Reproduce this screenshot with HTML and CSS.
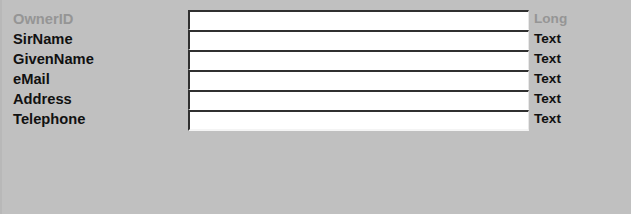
FILE: index.html
```html
<!DOCTYPE html>
<html lang="en">
<head>
    <meta charset="UTF-8">
    <title>Owner</title>
    <link rel="stylesheet" href="styles.css">
</head>
<body>
    <div class="form">
        <div class="row">
            <label class="field-name disabled">OwnerID</label>
            <input type="text" class="field-input">
            <span class="field-type disabled">Long</span>
        </div>
        <div class="row">
            <label class="field-name">SirName</label>
            <input type="text" class="field-input">
            <span class="field-type">Text</span>
        </div>
        <div class="row">
            <label class="field-name">GivenName</label>
            <input type="text" class="field-input">
            <span class="field-type">Text</span>
        </div>
        <div class="row">
            <label class="field-name">eMail</label>
            <input type="text" class="field-input">
            <span class="field-type">Text</span>
        </div>
        <div class="row">
            <label class="field-name">Address</label>
            <input type="text" class="field-input">
            <span class="field-type">Text</span>
        </div>
        <div class="row">
            <label class="field-name">Telephone</label>
            <input type="text" class="field-input">
            <span class="field-type">Text</span>
        </div>
    </div>
</body>
</html>
```

FILE: styles.css
```css
html, body {
    height: 100%;
}
body {
    margin: 0;
    background-color: #c0c0c0;
    font-family: "Liberation Sans", Arial, sans-serif;
    color: #000;
    border-left: 2px solid #b8b8b8;
    box-sizing: border-box;
}
.form {
    padding-top: 10px;
}
.row {
    display: flex;
    align-items: center;
    height: 20px;
}
.field-name {
    width: 175px;
    padding-left: 11px;
    font-size: 14.7px;
    font-weight: bold;
    line-height: 20px;
    margin-top: -2px;
    color: #111;
}
.field-input {
    width: 341px;
    height: 20px;
    box-sizing: border-box;
    margin: 0;
    padding: 0 4px;
    background: #fff;
    border: none;
    border-top: 2px solid #303030;
    border-left: 2px solid #303030;
    border-right: 1px solid #e8e8e8;
    border-bottom: 1px solid #fff;
    outline: none;
}
.row:last-child .field-input {
    height: 21px;
    border-bottom: 2px solid #f4f4f4;
}
.field-type {
    padding-left: 5px;
    font-size: 13.6px;
    font-weight: bold;
    line-height: 20px;
    margin-top: -3px;
    color: #111;
}
.field-name.disabled,
.field-type.disabled {
    color: #959595;
}
```
